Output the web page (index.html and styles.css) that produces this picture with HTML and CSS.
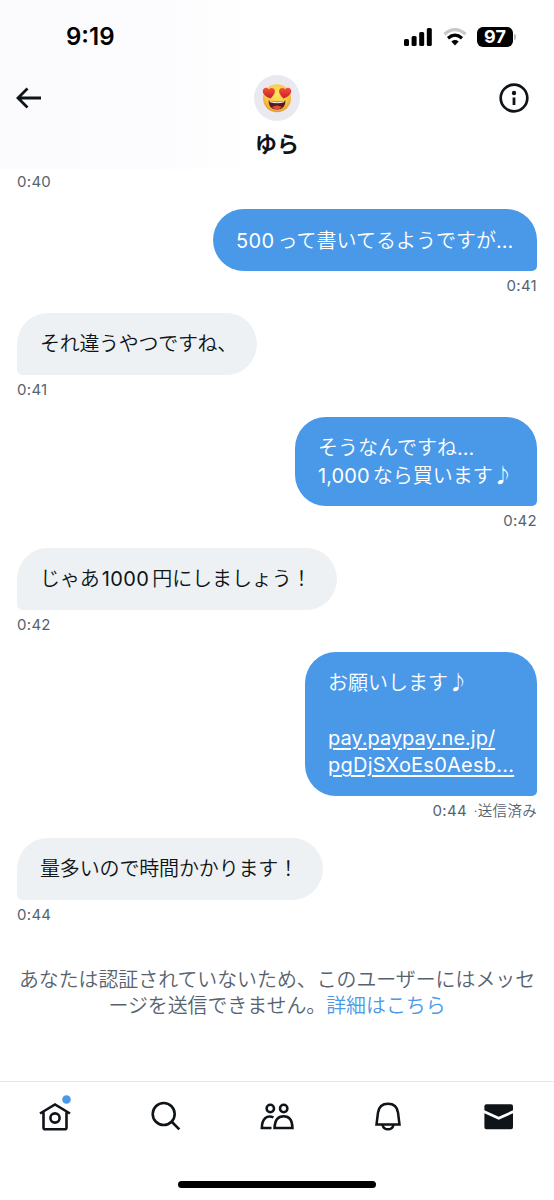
FILE: index.html
```
<!DOCTYPE html>
<html lang="ja">
<head>
<meta charset="utf-8">
<title>ゆら</title>
<link rel="stylesheet" href="styles.css">
</head>
<body>
<div class="screen">
  <header class="header">
    <div class="status">
      <span class="clock">9:19</span>
      <div class="indicators">
        <svg class="signal" width="28" height="18" viewBox="0 0 28 18"><rect x="0" y="11" width="5" height="7" rx="1.5"/><rect x="7.6" y="8" width="5" height="10" rx="1.5"/><rect x="15.2" y="4" width="5" height="14" rx="1.5"/><rect x="22.8" y="0" width="5" height="18" rx="1.5"/></svg>
        <svg class="wifi" width="24" height="18" viewBox="0 0 24 18"><path d="M1.5 6.2Q12-3 22.5 6.2" fill="none" stroke="#c8c8c8" stroke-width="3.2"/><path d="M5 10.2Q12 4.200 19 10.2" fill="none" stroke="#000" stroke-width="3.2"/><path d="M8.300 13.500Q12 10.700 15.700 13.500L12 17.400Z"/></svg>
        <div class="battery"><span class="level">97</span><span class="cap"></span></div>
      </div>
    </div>
    <div class="titlebar">
      <svg class="back" width="26" height="22" viewBox="0 0 26 22"><path d="M11.500 1.500L2 11L11.500 20.500M2 11H25" fill="none" stroke="#0f1419" stroke-width="2.800"/></svg>
      <div class="contact">
        <svg class="avatar" width="46" height="46" viewBox="0 0 46 46">
          <defs>
            <radialGradient id="face" cx="50%" cy="35%" r="65%"><stop offset="0" stop-color="#ffe65c"/><stop offset=".65" stop-color="#f8c746"/><stop offset="1" stop-color="#e89a32"/></radialGradient>
            <linearGradient id="heart" x1="0" y1="0" x2="0" y2="1"><stop offset="0" stop-color="#f4503f"/><stop offset="1" stop-color="#c91f25"/></linearGradient>
          </defs>
          <circle cx="23" cy="23" r="23" fill="#e9e9ef"/>
          <circle cx="23" cy="23.300" r="14" fill="url(#face)"/>
          <path d="M14.500 25.500Q23 28 31.500 25.500Q31.500 34.500 23 34.500Q14.500 34.500 14.500 25.500Z" fill="#54191a"/>
          <path d="M15.500 26Q23 28.300 30.500 26L30 27.300Q23 29.300 16 27.300Z" fill="#fff4e6"/>
          <path d="M18 32Q23 28.800 28 32Q25.800 34.200 23 34.200Q20.200 34.200 18 32Z" fill="#dd4d46"/>
          <path d="M16.500 23.500C11.500 21.500 8.400 18.700 8.800 15.700C9.200 12.400 13.200 11.800 14.800 14.400C17 12 20.700 12.800 20.900 16C21 18.700 19 21 16.500 23.500Z" fill="url(#heart)"/>
          <path d="M29.500 23.500C34.500 21.500 37.600 18.700 37.200 15.700C36.800 12.400 32.800 11.800 31.200 14.400C29 12 25.300 12.800 25.100 16C25 18.700 27 21 29.500 23.500Z" fill="url(#heart)"/>
        </svg>
        <h1 class="name">ゆら</h1>
      </div>
      <svg class="info" width="30" height="30" viewBox="0 0 30 30"><circle cx="15" cy="15" r="13.300" fill="none" stroke="#0f1419" stroke-width="2.700"/><circle cx="15" cy="10" r="2.200"/><path d="M13.600 14.500h2.800v7.500h-2.800z"/></svg>
    </div>
  </header>

  <main class="thread">
    <div class="time first">0:40</div>
    <div class="message sent"><div class="bubble b1"><span class="num">500</span>って書いてるようですが<span class="dots">...</span></div><div class="time">0:41</div></div>
    <div class="message"><div class="bubble b2">それ違うやつですね、</div><div class="time">0:41</div></div>
    <div class="message sent"><div class="bubble b3">そうなんですね<span class="dots">...</span><br><span class="num tight">1,000</span>なら買います♪</div><div class="time">0:42</div></div>
    <div class="message"><div class="bubble b4">じゃあ<span class="num lead">1000</span>円にしましょう！</div><div class="time">0:42</div></div>
    <div class="message sent"><div class="bubble b5">お願いします♪<br><br><a class="url">pay.paypay.ne.jp/<br><span class="path">pgDjSXoEs0Aesb...</span></a></div><div class="time">0:44 <span class="state">·送信済み</span></div></div>
    <div class="message"><div class="bubble b6">量多いので時間かかります！</div><div class="time">0:44</div></div>
    <p class="notice">あなたは認証されていないため、このユーザーにはメッセ<br>ージを送信できません。<a class="more">詳細はこちら</a></p>
  </main>

  <nav class="tabs">
    <div class="tab"><svg width="32" height="40" viewBox="0 0 32 40"><path d="M1 19.500L16 10.500L31 19.500M4.500 18V33.500Q4.500 35.300 6.300 35.300H25.700Q27.500 35.300 27.500 33.500V18" fill="none" stroke="#0f1419" stroke-width="2.600"/><circle cx="16" cy="24" r="4.600" fill="none" stroke="#0f1419" stroke-width="2.600"/><circle cx="27.500" cy="5.500" r="4.300" fill="#4a99e9"/></svg></div>
    <div class="tab"><svg width="32" height="40" viewBox="0 0 32 40"><circle cx="13.700" cy="20" r="11" fill="none" stroke="#0f1419" stroke-width="2.600"/><path d="M21.500 27.500L29.300 35.300" stroke="#0f1419" stroke-width="2.600"/></svg></div>
    <div class="tab"><svg width="36" height="40" viewBox="0 0 36 40"><g fill="none" stroke="#0f1419" stroke-width="2.500"><circle cx="11.300" cy="14.500" r="3.700"/><circle cx="24.700" cy="14.500" r="3.700"/><path d="M14.500 23.300C7.500 20.500 3 25 2.800 34H12.500"/><path d="M15.500 34C15.800 26 19.200 22.300 24.700 22.300C30.200 22.300 33.300 26.500 33.500 34Z"/></g></svg></div>
    <div class="tab"><svg width="32" height="40" viewBox="0 0 32 40"><g fill="none" stroke="#0f1419" stroke-width="2.500"><path d="M4.500 30.500L6 18.500C6.800 12.800 10.600 9.700 16 9.700C21.400 9.700 25.200 12.800 26 18.500L27.500 30.500Z"/><path d="M10.500 31C12 36.800 20 36.800 21.500 31"/></g></svg></div>
    <div class="tab"><svg width="32" height="40" viewBox="0 0 32 40"><path d="M1.400 16.300V12.300Q1.400 10.300 3.400 10.300H28Q30 10.300 30 12.300V16.300L15.700 22.700Z"/><path d="M1.400 19.300L15.700 25.800L30 19.300V33.300Q30 35.300 28 35.300H3.400Q1.400 35.300 1.400 33.300Z"/></svg></div>
  </nav>
  <div class="home-indicator"></div>
</div>
</body>
</html>
```
FILE: styles.css
```
* { box-sizing: border-box; }
body { margin: 0; background: #fff; color: #0f1419; font-family: Inter, "Noto Sans CJK JP", sans-serif; }
svg { display: block; flex: none; fill: #0f1419; }
.screen { width: 554px; height: 1200px; display: flex; flex-direction: column; overflow: hidden; }

.header { height: 169px; flex: none; background: linear-gradient(90deg, #fbfbfd 0, #fcfcfe 160px, #fff 260px); }
.status { height: 75px; padding: 0 38px 2px 66px; display: flex; justify-content: space-between; align-items: center; }
.clock { font-size: 24px; font-weight: 600; color: #000; letter-spacing: 0; }
.indicators { display: flex; align-items: center; }
.signal, .wifi { fill: #000; }
.wifi { margin-left: 11px; }
.battery { display: flex; align-items: center; margin-left: 10px; gap: 1px; }
.level { width: 36px; height: 20px; border-radius: 6px; background: #000; color: #fff; font-size: 18px; font-weight: 700; line-height: 20px; text-align: center; }
.cap { width: 2px; height: 6px; border-radius: 0 2px 2px 0; background: #bbb; }
.titlebar { display: grid; grid-template-columns: 1fr auto 1fr; padding: 0 25px 0 16px; }
.back { margin-top: 12px; }
.contact { display: flex; flex-direction: column; align-items: center; margin-left: 9px; }
.name { margin: 8px 0 0; font-size: 22px; line-height: 30px; font-weight: 700; }
.info { margin-top: 8px; justify-self: end; }

.thread { flex: 1; padding: 0 17px; }
.time { height: 41.400px; padding-top: 5.500px; font-size: 15px; line-height: 18px; color: #56636f; letter-spacing: .3px; }
.first { height: 40px; padding-top: 4px; }
.message { display: flex; flex-direction: column; align-items: flex-start; }
.sent { align-items: flex-end; }
.bubble { padding: 18.500px 23px 16.500px; border-radius: 31px 31px 31px 5px; background: #edf1f3; font-size: 20px; font-weight: 350; line-height: 27.400px; white-space: nowrap; }
.sent .bubble { border-radius: 31px 31px 5px 31px; background: #4a99e9; color: #fff; }
.b1 { width: 324px; }
.b2 { width: 240px; letter-spacing: -.3px; }
.b3 { width: 242px; }
.b4 { width: 320px; letter-spacing: -.1px; }
.b5 { width: 232px; }
.b6 { width: 306px; letter-spacing: -.15px; }
.num, .url, .dots { font-weight: 400; }
.num { margin-right: 3px; letter-spacing: .4px; }
.tight { letter-spacing: .1px; }
.lead { margin-left: 2px; }
.url { text-decoration: underline; text-decoration-thickness: 1.500px; text-underline-offset: 3px; }
.path { letter-spacing: .23px; }
.state { margin-left: 2px; font-size: 14.500px; font-weight: 350; }
.notice { margin: 26px -10px 0; font-size: 19.900px; font-weight: 350; line-height: 26px; text-align: center; color: #56636f; white-space: nowrap; }
.more { color: #4a99e9; }

.tabs { height: 100px; flex: none; border-top: 1px solid #e4e9ee; display: grid; grid-template-columns: repeat(5, 1fr); padding-top: 12px; }
.tab { display: flex; justify-content: center; }
.home-indicator { flex: none; width: 198px; height: 7px; margin: 0 auto 12px; border-radius: 4px; background: #000; }
```
